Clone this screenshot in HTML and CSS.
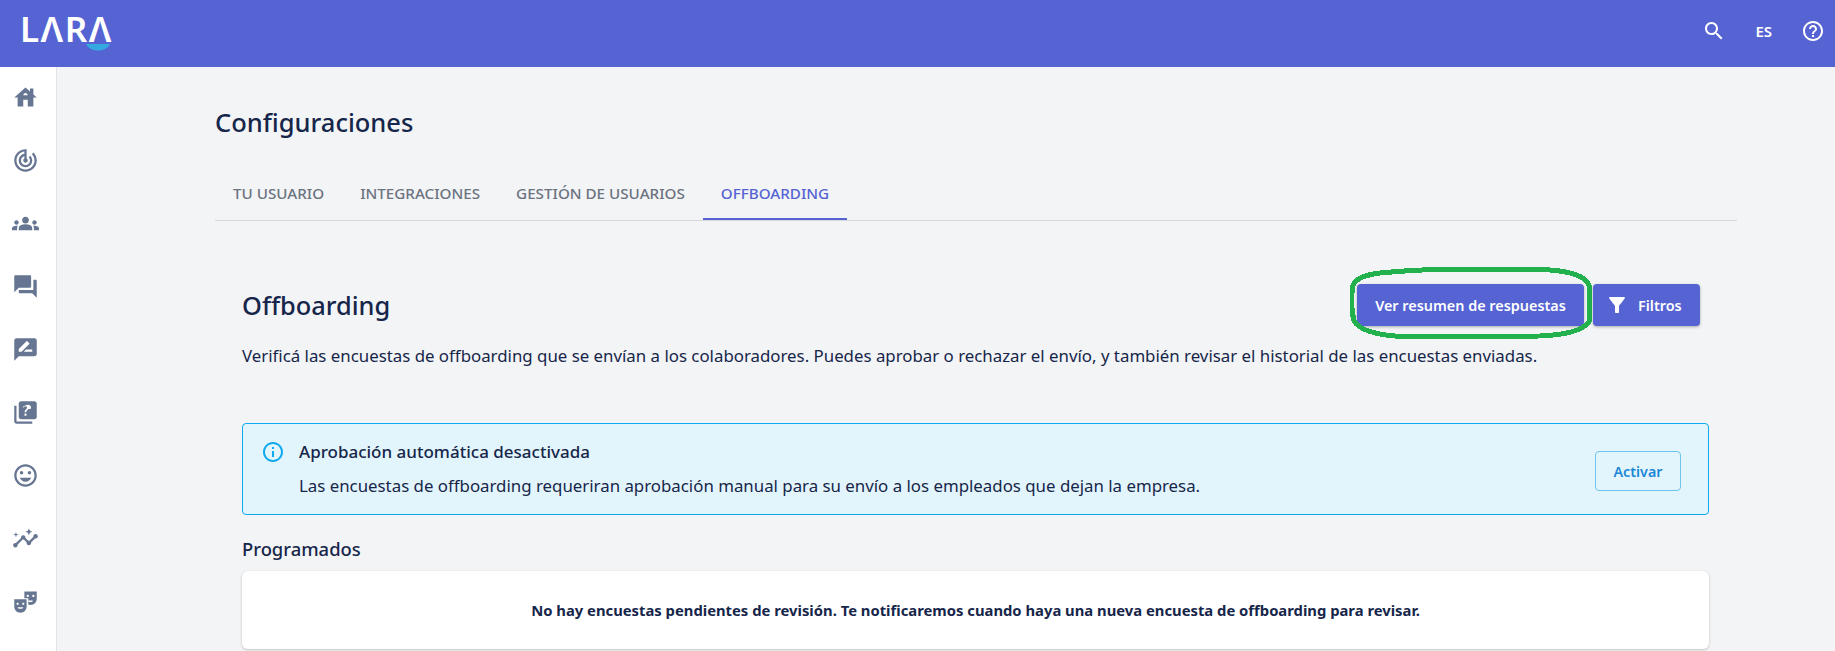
FILE: index.html
```html
<!DOCTYPE html>
<html lang="es">
<head>
  <meta charset="UTF-8">
  <title>Configuraciones</title>
  <link rel="stylesheet" href="styles.css">
</head>
<body>

  <header class="topbar">
    <div class="logo">
      <span class="logo-text">LΛRΛ</span>
      <svg class="logo-smile" viewBox="0 0 24 7"><path d="M0 0h24c-2 4-6 6.500-12 6.500S2 4 0 0z"/></svg>
    </div>
    <div class="topbar-acciones">
      <svg class="icono-top" viewBox="0 0 24 24"><path d="M15.500 14h-.79l-.28-.27C15.410 12.590 16 11.110 16 9.500 16 5.910 13.090 3 9.500 3S3 5.910 3 9.500 5.910 16 9.500 16c1.610 0 3.090-.59 4.230-1.570l.27.28v.79l5 4.990L20.490 19l-4.990-5zm-6 0C7.010 14 5 11.990 5 9.500S7.010 5 9.500 5 14 7.010 14 9.500 11.990 14 9.500 14z"/></svg>
      <span class="idioma">ES</span>
      <svg class="icono-top" viewBox="0 0 24 24"><path d="M11 18h2v-2h-2v2zm1-16C6.480 2 2 6.480 2 12s4.480 10 10 10 10-4.480 10-10S17.520 2 12 2zm0 18c-4.410 0-8-3.590-8-8s3.590-8 8-8 8 3.590 8 8-3.590 8-8 8zm0-14c-2.210 0-4 1.790-4 4h2c0-1.100.9-2 2-2s2 .9 2 2c0 2-3 1.750-3 5h2c0-2.250 3-2.500 3-5 0-2.210-1.790-4-4-4z"/></svg>
    </div>
  </header>

  <div class="contenedor">
    <nav class="sidebar">
      <div class="sidebar-item"><svg viewBox="0 0 24 24"><path d="M19 9.300V4h-3v2.600L12 3 2 12h3v8h5v-6h4v6h5v-8h3l-3-2.700zm-9 .7c0-1.100.9-2 2-2s2 .9 2 2h-4z"/></svg></div>
      <div class="sidebar-item"><svg viewBox="0 0 24 24"><path d="M19.070 4.930l-1.410 1.410C19.100 7.790 20 9.790 20 12c0 4.420-3.580 8-8 8s-8-3.580-8-8c0-4.080 3.050-7.440 7-7.930v2.020C8.160 6.570 6 9.030 6 12c0 3.310 2.690 6 6 6s6-2.690 6-6c0-1.660-.67-3.160-1.760-4.240l-1.410 1.410C15.550 9.900 16 10.900 16 12c0 2.210-1.790 4-4 4s-4-1.790-4-4c0-1.860 1.280-3.410 3-3.860v2.140c-.6.35-1 .98-1 1.720 0 1.100.9 2 2 2s2-.9 2-2c0-.74-.4-1.380-1-1.720V2h-1C6.480 2 2 6.480 2 12s4.480 10 10 10 10-4.480 10-10c0-2.760-1.120-5.260-2.930-7.070z"/></svg></div>
      <div class="sidebar-item"><svg viewBox="0 0 24 24"><path d="M12 12.750c1.630 0 3.070.39 4.240.9 1.080.48 1.760 1.560 1.760 2.730V18H6v-1.610c0-1.180.68-2.260 1.760-2.730 1.170-.52 2.610-.91 4.240-.91zM4 13c1.100 0 2-.9 2-2s-.9-2-2-2-2 .9-2 2 .9 2 2 2zm1.130 1.100c-.37-.06-.74-.1-1.130-.1-.99 0-1.930.21-2.780.58C.48 14.900 0 15.620 0 16.430V18h4.500v-1.610c0-.83.23-1.610.63-2.290zM20 13c1.100 0 2-.9 2-2s-.9-2-2-2-2 .9-2 2 .9 2 2 2zm4 3.430c0-.81-.48-1.530-1.220-1.850-.85-.37-1.790-.58-2.780-.58-.39 0-.76.04-1.130.1.4.68.63 1.460.63 2.290V18H24v-1.570zM12 6c1.660 0 3 1.340 3 3s-1.340 3-3 3-3-1.340-3-3 1.340-3 3-3z"/></svg></div>
      <div class="sidebar-item"><svg viewBox="0 0 24 24"><path d="M21 6h-2v9H6v2c0 .55.45 1 1 1h11l4 4V7c0-.55-.45-1-1-1zm-4 6V3c0-.55-.45-1-1-1H3c-.55 0-1 .45-1 1v14l4-4h10c.55 0 1-.45 1-1z"/></svg></div>
      <div class="sidebar-item"><svg viewBox="0 0 24 24"><path d="M20 2H4c-1.100 0-2 .9-2 2v18l4-4h14c1.100 0 2-.9 2-2V4c0-1.100-.9-2-2-2zM6 14v-2.470l6.880-6.880c.2-.2.51-.2.71 0l1.770 1.770c.2.2.2.51 0 .71L8.470 14H6zm12 0h-7.500l2-2H18v2z"/></svg></div>
      <div class="sidebar-item"><svg viewBox="0 0 24 24"><path d="M4 6H2v14c0 1.100.9 2 2 2h14v-2H4V6zm16-4H8c-1.100 0-2 .9-2 2v12c0 1.100.9 2 2 2h12c1.100 0 2-.9 2-2V4c0-1.100-.9-2-2-2zm-7.990 13c-.59 0-1.050-.47-1.050-1.050 0-.59.47-1.040 1.050-1.040.59 0 1.040.45 1.040 1.040-.01.58-.45 1.050-1.040 1.050zm2.500-6.170c-.63.93-1.230 1.210-1.560 1.810-.13.24-.18.4-.18 1.180h-1.520c0-.41-.06-1.080.26-1.650.41-.73 1.180-1.160 1.630-1.800.48-.68.21-1.940-1.140-1.940-.88 0-1.320.67-1.500 1.230l-1.370-.57C11.510 5.960 12.520 5 13.990 5c1.230 0 2.080.56 2.510 1.260.37.61.58 1.730.01 2.570z"/></svg></div>
      <div class="sidebar-item"><svg viewBox="0 0 24 24"><path d="M11.990 2C6.470 2 2 6.480 2 12s4.470 10 9.990 10C17.520 22 22 17.520 22 12S17.520 2 11.990 2zM12 20c-4.420 0-8-3.580-8-8s3.580-8 8-8 8 3.580 8 8-3.580 8-8 8zm3.500-9c.83 0 1.500-.67 1.500-1.500S16.330 8 15.500 8 14 8.670 14 9.500s.67 1.500 1.500 1.500zm-7 0c.83 0 1.500-.67 1.500-1.500S9.330 8 8.500 8 7 8.670 7 9.500 7.670 11 8.500 11zm3.500 6.500c2.330 0 4.310-1.460 5.110-3.500H6.890c.8 2.040 2.780 3.500 5.110 3.500z"/></svg></div>
      <div class="sidebar-item"><svg viewBox="0 0 24 24"><path d="M21 8c-1.450 0-2.260 1.440-1.930 2.510l-3.550 3.560c-.3-.09-.74-.09-1.040 0l-2.550-2.550C12.270 10.450 11.460 9 10 9c-1.450 0-2.270 1.440-1.930 2.520l-4.560 4.550C2.440 15.740 1 16.550 1 18c0 1.100.9 2 2 2 1.450 0 2.260-1.440 1.930-2.510l4.550-4.560c.3.09.74.09 1.040 0l2.550 2.550C12.730 16.550 13.540 18 15 18c1.450 0 2.270-1.440 1.930-2.520l3.560-3.550c1.070.33 2.510-.48 2.510-1.930 0-1.100-.9-2-2-2zM15 9l.94-2.070L18 6l-2.060-.93L15 3l-.92 2.070L12 6l2.080.93zM3.500 11L4 9l2-.5L4 8l-.5-2L3 8l-2 .5L3 9z"/></svg></div>
      <div class="sidebar-item"><svg viewBox="0 0 24 24"><path d="M2 16.500C2 19.540 4.460 22 7.500 22s5.500-2.460 5.500-5.500V10H2v6.500zm5.500 2C6.120 18.500 5 17.830 5 17h5c0 .83-1.120 1.500-2.500 1.500zM4 14c0-.55.45-1 1-1s1 .45 1 1-.45 1-1 1-1-.45-1-1zm5 0c0-.55.45-1 1-1s1 .45 1 1-.45 1-1 1-1-.45-1-1zM11 3v6h3.500v5.900c.65.07 1.300.1 2 .1 3.040 0 5.500-2.460 5.500-5.500V3H11zm3 5.080c-.55 0-1-.45-1-1s.45-1 1-1 1 .45 1 1-.45 1-1 1zM16.500 12.500c-.8 0-1.500-.3-2-.8V11h4c0 .83-.9 1.500-2 1.500zM19 8.080c-.55 0-1-.45-1-1s.45-1 1-1 1 .45 1 1-.45 1-1 1z"/></svg></div>
    </nav>

    <main class="principal">
      <h1 class="titulo">Configuraciones</h1>

      <div class="tabs">
        <div class="tab">TU USUARIO</div>
        <div class="tab">INTEGRACIONES</div>
        <div class="tab">GESTIÓN DE USUARIOS</div>
        <div class="tab activo">OFFBOARDING</div>
      </div>

      <section class="seccion">
        <div class="seccion-cabecera">
          <h2 class="subtitulo">Offboarding</h2>
          <div class="botones">
            <button class="boton boton-resumen">
              Ver resumen de respuestas
              <!-- marca verde encima del boton -->
              <svg class="marca" viewBox="0 0 242 72" shape-rendering="crispEdges"><path d="M30 6C60 3 80 2 120 2L200 3C225 5 235 10 239 18C240 30 240 42 239 55C232 64 215 68 190 69L60 70C30 69 10 64 4 54C1 42 1 30 3 18C6 11 15 8 30 6Z"/></svg>
            </button>
            <button class="boton boton-filtros">
              <svg viewBox="0 0 24 24"><path d="M4.250 5.610C6.270 8.200 10 13 10 13v6c0 .55.45 1 1 1h2c.55 0 1-.45 1-1v-6s3.720-4.800 5.740-7.390c.51-.66.04-1.610-.79-1.610H5.040c-.83 0-1.300.95-.79 1.610z"/></svg>
              Filtros
            </button>
          </div>
        </div>
        <p class="descripcion">Verificá las encuestas de offboarding que se envían a los colaboradores. Puedes aprobar o rechazar el envío, y también revisar el historial de las encuestas enviadas.</p>

        <div class="alerta">
          <svg class="alerta-icono" viewBox="0 0 24 24"><path d="M11 7h2v2h-2zm0 4h2v6h-2zm1-9C6.480 2 2 6.480 2 12s4.480 10 10 10 10-4.480 10-10S17.520 2 12 2zm0 18c-4.410 0-8-3.590-8-8s3.590-8 8-8 8 3.590 8 8-3.590 8-8 8z"/></svg>
          <div class="alerta-texto">
            <div class="alerta-titulo">Aprobación automática desactivada</div>
            <div>Las encuestas de offboarding requeriran aprobación manual para su envío a los empleados que dejan la empresa.</div>
          </div>
          <button class="boton-activar">Activar</button>
        </div>

        <h3 class="programados">Programados</h3>
        <div class="tarjeta-vacia">No hay encuestas pendientes de revisión. Te notificaremos cuando haya una nueva encuesta de offboarding para revisar.</div>
      </section>
    </main>
  </div>

</body>
</html>
```

FILE: styles.css
```css
* {
  box-sizing: border-box;
}

body {
  margin: 0;
  height: 651px;
  overflow: hidden;
  font-family: "Noto Sans", "Open Sans", sans-serif;
  color: #16264a;
  background-color: #f3f4f6;
}

.topbar {
  height: 67px;
  display: flex;
  justify-content: space-between;
  align-items: flex-start;
  background-color: #5563d3;
  color: white;
}

.logo {
  position: relative;
  margin: 5px 0 0 20px;
  height: 48px;
}

.logo-text {
  font-size: 35px;
  font-weight: 600;
  letter-spacing: 1.5px;
  line-height: 48px;
}

.logo-smile {
  position: absolute;
  left: 66px;
  top: 39px;
  width: 24px;
  height: 7px;
  fill: #34a9e0;
}

.topbar-acciones {
  display: flex;
  align-items: center;
  gap: 29px;
  height: 62px;
  margin-right: 10px;
}

.icono-top {
  width: 24px;
  height: 24px;
  fill: white;
}

.idioma {
  font-size: 15px;
  font-weight: 600;
}

.contenedor {
  display: flex;
}

.sidebar {
  width: 57px;
  height: 584px;
  flex-shrink: 0;
  background-color: white;
  border-right: 1px solid #e2e3e6;
}

.sidebar-item {
  width: 50px;
  height: 63px;
  display: flex;
  justify-content: center;
  align-items: center;
}

.sidebar-item:first-child {
  margin-top: -1px;
}

.sidebar-item svg {
  width: 27px;
  height: 27px;
  fill: #667591;
}

.principal {
  flex: 1;
  padding: 0 98px 0 158px;
}

.titulo {
  margin: 37px 0 0;
  font-size: 25.5px;
  font-weight: 500;
  line-height: 36px;
}

.tabs {
  display: flex;
  margin-top: 20px;
  border-bottom: 1px solid #d5d7dc;
}

.tab {
  padding: 0 18px;
  height: 60px;
  line-height: 66px;
  font-size: 15.2px;
  font-weight: 500;
  color: #6b7280;
}

.tab.activo {
  color: #5563d3;
  border-bottom: 2px solid #5563d3;
  margin-bottom: -1px;
}

.seccion {
  padding: 0 28px 0 27px;
}

.seccion-cabecera {
  display: flex;
  justify-content: space-between;
  align-items: center;
  margin-top: 63px;
  padding-right: 9px;
}

.subtitulo {
  margin: 0;
  font-size: 25.4px;
  font-weight: 500;
}

.botones {
  display: flex;
  gap: 9px;
}

.boton {
  position: relative;
  height: 42px;
  display: flex;
  align-items: center;
  justify-content: center;
  font-family: inherit;
  font-size: 14.4px;
  font-weight: 600;
  color: white;
  background-color: #5563d3;
  border: none;
  border-radius: 4px;
  box-shadow: 0 1px 3px rgba(0, 0, 0, 0.3);
}

.boton-resumen {
  width: 227px;
}

.boton-filtros {
  width: 107px;
  padding: 0 0 0 12px;
  justify-content: flex-start;
}

.boton-filtros svg {
  width: 24px;
  height: 24px;
  fill: white;
  margin-right: 9px;
}

.marca {
  position: absolute;
  left: -7px;
  top: -17px;
  width: 242px;
  height: 72px;
  fill: none;
  stroke: #22b14c;
  stroke-width: 5;
}

.descripcion {
  margin: 18px 0 0;
  font-size: 16.83px;
  line-height: 24px;
}

.alerta {
  height: 92px;
  margin-top: 55px;
  padding: 0 27px 0 18px;
  display: flex;
  align-items: center;
  background-color: #e3f5fc;
  border: 1px solid #0ea9ef;
  border-radius: 4px;
}

.alerta-icono {
  width: 24px;
  height: 24px;
  fill: #0ea9ef;
  margin-right: 14px;
  align-self: flex-start;
  margin-top: 16px;
}

.alerta-texto {
  flex: 1;
  font-size: 16.83px;
  line-height: 24px;
}

.alerta-titulo {
  font-size: 17px;
  font-weight: 500;
  margin-bottom: 10px;
}

.boton-activar {
  width: 86px;
  height: 40px;
  margin-top: 4px;
  font-family: inherit;
  font-size: 14.3px;
  font-weight: 600;
  color: #1c87d6;
  background: transparent;
  border: 1px solid #6fc3ee;
  border-radius: 4px;
}

.programados {
  margin: 20px 0 0;
  font-size: 18.4px;
  font-weight: 500;
  line-height: 28px;
}

.tarjeta-vacia {
  height: 78px;
  margin-top: 8px;
  display: flex;
  justify-content: center;
  align-items: center;
  font-size: 14.8px;
  font-weight: 700;
  background-color: white;
  border-radius: 6px;
  box-shadow: 0 1px 3px rgba(0, 0, 0, 0.2);
}
```
